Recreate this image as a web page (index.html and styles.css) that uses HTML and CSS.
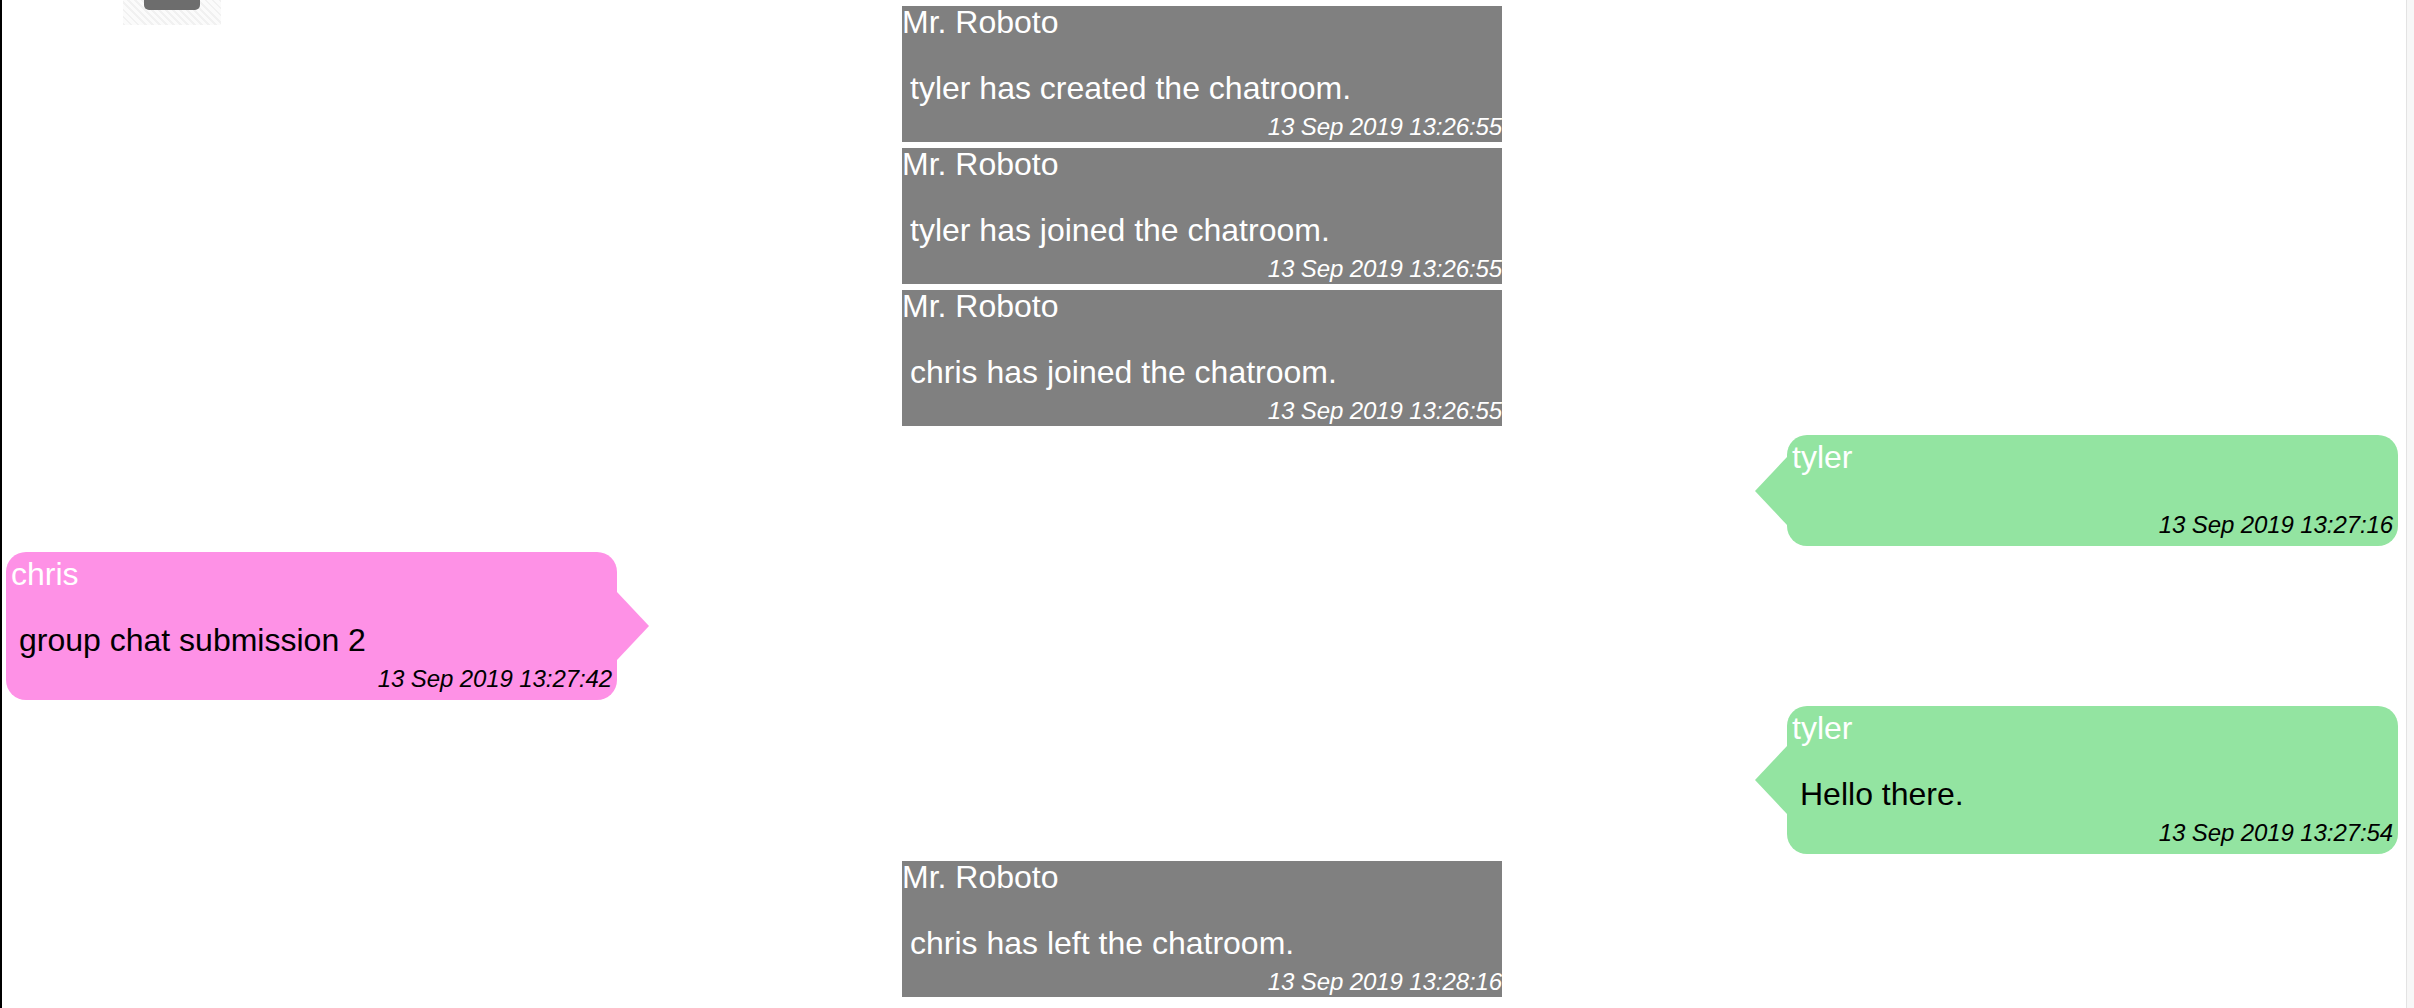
FILE: index.html
```html
<!DOCTYPE html>
<html lang="en">
<head>
<meta charset="utf-8">
<title>Chatroom</title>
<link rel="stylesheet" href="styles.css">
</head>
<body>
<div class="page">
  <main class="chat">
    <div class="top-widget"><div class="top-btn"></div></div>
    <div class="feed">
      <div class="msg system">
        <div class="name">Mr. Roboto</div>
        <div class="body">tyler has created the chatroom.</div>
        <div class="time">13 Sep 2019 13:26:55</div>
      </div>
      <div class="msg system">
        <div class="name">Mr. Roboto</div>
        <div class="body">tyler has joined the chatroom.</div>
        <div class="time">13 Sep 2019 13:26:55</div>
      </div>
      <div class="msg system">
        <div class="name">Mr. Roboto</div>
        <div class="body">chris has joined the chatroom.</div>
        <div class="time">13 Sep 2019 13:26:55</div>
      </div>
      <div class="msg bubble right">
        <div class="name">tyler</div>
        <div class="body"></div>
        <div class="time">13 Sep 2019 13:27:16</div>
      </div>
      <div class="msg bubble left">
        <div class="name">chris</div>
        <div class="body">group chat submission 2</div>
        <div class="time">13 Sep 2019 13:27:42</div>
      </div>
      <div class="msg bubble right">
        <div class="name">tyler</div>
        <div class="body">Hello there.</div>
        <div class="time">13 Sep 2019 13:27:54</div>
      </div>
      <div class="msg system">
        <div class="name">Mr. Roboto</div>
        <div class="body">chris has left the chatroom.</div>
        <div class="time">13 Sep 2019 13:28:16</div>
      </div>
    </div>
  </main>
  <div class="scrolltrack"></div>
</div>
</body>
</html>
```
FILE: styles.css
```css
html, body {
  margin: 0;
  height: 100%;
}
body {
  font-family: "Liberation Sans", Arial, Helvetica, sans-serif;
  background: #fff;
  overflow: hidden;
}
.page {
  display: flex;
  height: 100vh;
}
.chat {
  flex: 1;
  border-left: 2px solid #000;
  position: relative;
  overflow: hidden;
}
.scrolltrack {
  width: 7px;
  border-left: 1px solid #e3e3e3;
  background: #f7f7f7;
}
.top-widget {
  position: absolute;
  left: 121px;
  top: 0;
  width: 98px;
  height: 25px;
  display: flex;
  justify-content: center;
  background: repeating-linear-gradient(45deg, #f1f1f1 0 2px, #fbfbfb 2px 5px);
}
.top-btn {
  width: 56px;
  height: 10px;
  background: #6d6d6d;
  border-radius: 0 0 5px 5px;
}
.feed {
  display: flex;
  flex-direction: column;
  gap: 6px;
  padding: 6px 8px 0 4px;
}
.msg .name {
  font-size: 32px;
  line-height: 32px;
  color: #fff;
}
.msg .body {
  font-size: 32px;
  line-height: 37px;
  padding: 32px 0 6px 8px;
}
.msg .time {
  font-size: 24px;
  line-height: 28px;
  font-style: italic;
  text-align: right;
  letter-spacing: -0.1px;
}
.system {
  align-self: center;
  width: 600px;
  box-sizing: border-box;
  background: #808080;
  color: #fff;
  padding: 0 0 1px;
}
.bubble {
  position: relative;
  width: 611px;
  box-sizing: border-box;
  border-radius: 20px;
  padding: 6px 5px 7px;
  color: #000;
}
.system + .bubble {
  margin-top: 3px;
}
.bubble + .system {
  margin-top: 1px;
}
.bubble::after {
  content: "";
  position: absolute;
  top: 50%;
  margin-top: -34px;
  border-top: 34px solid transparent;
  border-bottom: 34px solid transparent;
}
.bubble.left {
  align-self: flex-start;
  background: #fe91e6;
}
.bubble.left::after {
  left: 100%;
  border-left: 32px solid #fe91e6;
}
.bubble.right {
  align-self: flex-end;
  background: #93e4a1;
}
.bubble.right::after {
  right: 100%;
  border-right: 32px solid #93e4a1;
}
```
